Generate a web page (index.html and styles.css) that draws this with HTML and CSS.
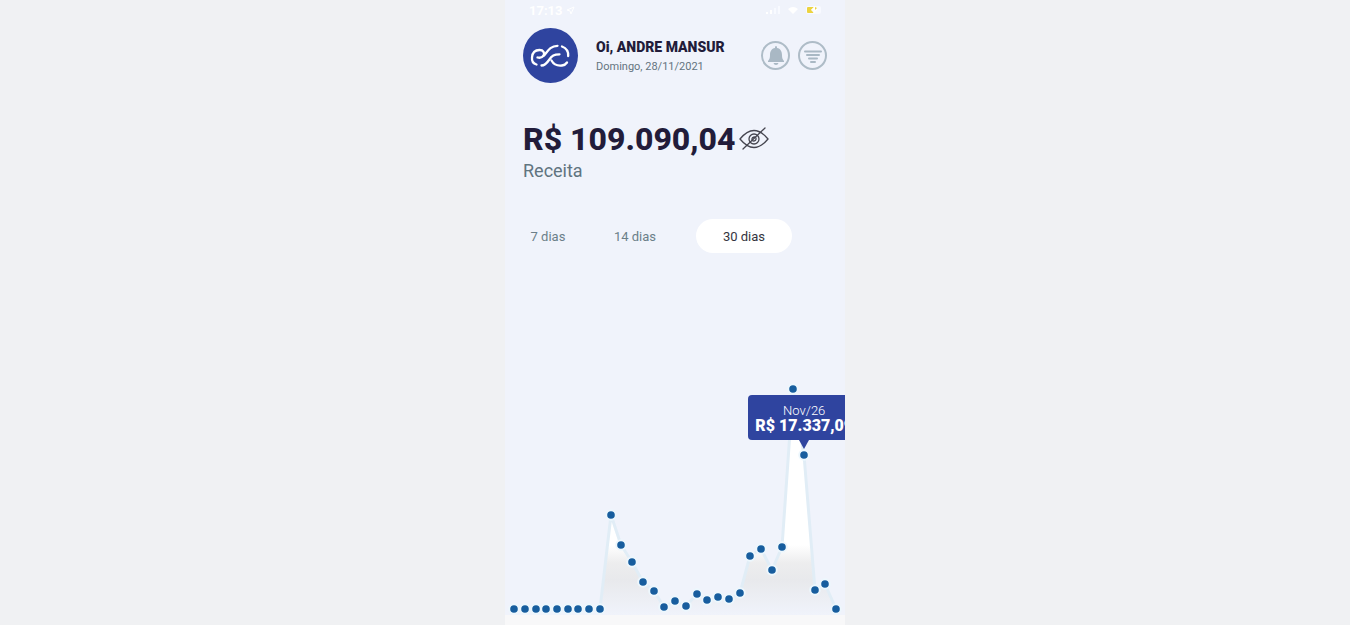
FILE: index.html
```html
<!DOCTYPE html>
<html lang="pt-BR">
<head>
    <meta charset="UTF-8">
    <meta name="viewport" content="width=device-width, initial-scale=1.0">
    <title>Receita</title>
    <link rel="stylesheet" href="styles.css">
</head>
<body>

    <main class="app">
        <!-- Status bar -->
        <div class="status-bar">
            <span class="status-time">17:13
                <svg width="9" height="9" viewBox="0 0 9 9" aria-hidden="true"><path d="M8 1 L1 4 L4 5 L5 8 Z" fill="none" stroke="#fff"/></svg>
            </span>
            <svg width="60" height="10" viewBox="0 0 60 10" aria-hidden="true">
                <path d="M1 9V7h2v2zM5 9V5h2v4z" fill="#fff"/>
                <path d="M9 9V3h2v6zM13 9V1h2v8z" fill="#f8faff"/>
                <path d="M23 4Q28 0 33 4L28 9Z" fill="#fff"/>
                <rect x="41" y="1" width="15" height="8" rx="2" fill="#f8faff"/>
                <path d="M43 2H49L46 5L49 8H43Q42 8 42 7V3Q42 2 43 2Z" fill="#ecd33f"/>
                <path d="M50 1L46 5H49L48 9L53 4H50Z" fill="#fff"/>
                <path d="M50 2L52 3L50 5Z" fill="#ecd33f"/>
            </svg>
        </div>

        <!-- Greeting -->
        <header class="header">
            <svg class="avatar" viewBox="0 0 55 55" aria-hidden="true">
                <circle cx="27.500" cy="27.500" r="27.500" fill="#2f449f"/>
                <g fill="none" stroke="#fff" stroke-width="2.300" stroke-linecap="round">
                    <path d="M13.500 36.500C10 35.500 8.700 32.500 9 29.500C9.400 24.500 12.500 22 16.500 22C20.500 22 22 25 20.500 27.500C19 30 16.500 30 14.500 29.500"/>
                    <path d="M18.500 37.500C22 37.500 24 35 26 32C29 27.500 31 26.300 36.500 26.300"/>
                    <path d="M20.500 28C24 25 26 17.800 34.500 17.800"/>
                    <path d="M28.500 32.500C31 37 35 38 39 37.500C41.500 37.300 43 36 44 34.500"/>
                    <path d="M39 18.500C43 20 45.500 23.500 45.200 28"/>
                </g>
            </svg>
            <div class="greeting">
                <h1 class="name">Oi, ANDRE MANSUR</h1>
                <p class="date">Domingo, 28/11/2021</p>
            </div>
            <div class="actions">
                <button class="icon-button" type="button" aria-label="Notificações">
                    <svg width="20" height="22" viewBox="0 0 20 22" aria-hidden="true">
                        <path d="M10 1C9 1 9 2 9 3C5.500 3.500 4 6.500 4 10C4 13 3.500 14 2 16V17H18V16C16.500 14 16 13 16 10C16 6.500 14.500 3.500 11 3C11 2 11 1 10 1ZM7.500 18H12.500Q12 20 10 20Q8 20 7.500 18Z" fill="#a9b8c4"/>
                    </svg>
                </button>
                <button class="icon-button" type="button" aria-label="Filtrar">
                    <svg width="20" height="20" viewBox="0 0 20 20" aria-hidden="true">
                        <path d="M2 5.500H18M4 9H16M6 12.500H14M8 16H12" stroke="#a9b8c4" stroke-width="2" stroke-linecap="round"/>
                    </svg>
                </button>
            </div>
        </header>

        <!-- Revenue -->
        <section class="revenue">
            <div class="amount-row">
                <strong class="amount">R$ 109.090,04</strong>
                <button class="eye-button" type="button" aria-label="Ocultar valor">
                    <svg width="30" height="24" viewBox="0 0 30 24" fill="none" stroke="#45454f" stroke-width="1.300" stroke-linecap="round" aria-hidden="true">
                        <path d="M1 12Q8 3.500 15 3.500Q22 3.500 29 12Q22 20.500 15 20.500Q8 20.500 1 12Z"/>
                        <circle cx="15" cy="12" r="5"/>
                        <path d="M13 13Q12.500 10 16 10M17 11Q17.500 14 14 14"/>
                        <path d="M4 22L26 1"/>
                    </svg>
                </button>
            </div>
            <p class="amount-label">Receita</p>
        </section>

        <!-- Period -->
        <nav class="periods" aria-label="Período">
            <button class="period" type="button">7 dias</button>
            <button class="period" type="button">14 dias</button>
            <button class="period active" type="button" aria-pressed="true">30 dias</button>
        </nav>

        <!-- Chart -->
        <section class="chart">
            <svg class="chart-plot" viewBox="0 0 340 250" role="img" aria-label="Receita por dia">
                <defs>
                    <linearGradient id="area" gradientUnits="userSpaceOnUse" x1="0" y1="150" x2="0" y2="250">
                        <stop offset="0" stop-color="#fff"/>
                        <stop offset="0.300" stop-color="#fff"/>
                        <stop offset="0.480" stop-color="#ededee"/>
                        <stop offset="0.650" stop-color="#e8e9ec"/>
                        <stop offset="1" stop-color="#f0f3fb"/>
                    </linearGradient>
                </defs>
                <path fill="url(#area)" d="M95 244L106 150L116 180L127 197L138 217L149 226L159 242L170 236L181 241L192 229L202 235L213 232L224 234L235 228L245 191L256 184L267 205L277 182L288 24L299 90L310 225L320 219L331 244V250H95Z"/>
                <path fill="none" stroke="#e1edf6" stroke-width="3" stroke-linejoin="round" d="M9 244H95L106 150L116 180L127 197L138 217L149 226L159 242L170 236L181 241L192 229L202 235L213 232L224 234L235 228L245 191L256 184L267 205L277 182L288 24L299 90L310 225L320 219L331 244"/>
                <g fill="#175d9e" stroke="#edf7fd" stroke-width="2">
                    <circle cx="9" cy="244" r="4.800"/>
                    <circle cx="20" cy="244" r="4.800"/>
                    <circle cx="31" cy="244" r="4.800"/>
                    <circle cx="41" cy="244" r="4.800"/>
                    <circle cx="52" cy="244" r="4.800"/>
                    <circle cx="63" cy="244" r="4.800"/>
                    <circle cx="73" cy="244" r="4.800"/>
                    <circle cx="84" cy="244" r="4.800"/>
                    <circle cx="95" cy="244" r="4.800"/>
                    <circle cx="106" cy="150" r="4.800"/>
                    <circle cx="116" cy="180" r="4.800"/>
                    <circle cx="127" cy="197" r="4.800"/>
                    <circle cx="138" cy="217" r="4.800"/>
                    <circle cx="149" cy="226" r="4.800"/>
                    <circle cx="159" cy="242" r="4.800"/>
                    <circle cx="170" cy="236" r="4.800"/>
                    <circle cx="181" cy="241" r="4.800"/>
                    <circle cx="192" cy="229" r="4.800"/>
                    <circle cx="202" cy="235" r="4.800"/>
                    <circle cx="213" cy="232" r="4.800"/>
                    <circle cx="224" cy="234" r="4.800"/>
                    <circle cx="235" cy="228" r="4.800"/>
                    <circle cx="245" cy="191" r="4.800"/>
                    <circle cx="256" cy="184" r="4.800"/>
                    <circle cx="267" cy="205" r="4.800"/>
                    <circle cx="277" cy="182" r="4.800"/>
                    <circle cx="288" cy="24" r="4.800"/>
                    <circle cx="299" cy="90" r="4.800"/>
                    <circle cx="310" cy="225" r="4.800"/>
                    <circle cx="320" cy="219" r="4.800"/>
                    <circle cx="331" cy="244" r="4.800"/>
                </g>
            </svg>
            <div class="tooltip">
                <span class="tooltip-date">Nov/26</span>
                <strong class="tooltip-value">R$ 17.337,09</strong>
            </div>
        </section>
        <footer class="bottom-strip"></footer>
    </main>

</body>
</html>
```
FILE: styles.css
```css
* {
    box-sizing: border-box;
}
body {
    margin: 0;
    background-color: #f0f1f3;
    font-family: Roboto, "Liberation Sans", sans-serif;
    color: #221c3a;
}
h1, p {
    margin: 0;
}
button {
    border: 0;
    padding: 0;
    background: none;
    font: inherit;
    color: inherit;
    cursor: pointer;
}
.app {
    display: flex;
    flex-direction: column;
    max-width: 340px;
    min-height: 100vh;
    margin: 0 auto;
    background-color: #f0f3fb;
    overflow: hidden;
}
.status-bar {
    display: flex;
    justify-content: space-between;
    align-items: center;
    height: 20px;
    padding: 0 20px 0 24px;
    color: #fff;
}
.status-time {
    font-size: 13px;
    font-weight: bold;
}

/* Greeting */
.header {
    display: flex;
    align-items: center;
    padding: 8px 18px 0;
}
.avatar {
    flex: none;
    width: 55px;
    height: 55px;
}
.greeting {
    flex: 1;
    margin-left: 18px;
    padding-top: 2px;
}
.name {
    font-size: 14px;
    line-height: 20px;
    font-weight: 900;
    white-space: nowrap;
}
.date {
    font-size: 11px;
    line-height: 20px;
    color: #64747f;
}
.actions {
    display: flex;
    gap: 8px;
}
.icon-button {
    display: flex;
    align-items: center;
    justify-content: center;
    width: 29px;
    height: 29px;
    border: 2px solid #aebcc7;
    border-radius: 50%;
}

/* Revenue */
.revenue {
    padding: 36px 18px 0;
}
.amount-row {
    display: flex;
    align-items: center;
    gap: 4px;
}
.amount {
    font-size: 32px;
    line-height: 40px;
    font-weight: 800;
    white-space: nowrap;
}
.eye-button {
    display: flex;
}
.amount-label {
    font-size: 18px;
    line-height: 24px;
    color: #60747f;
}

/* Period */
.periods {
    display: flex;
    padding: 36px 0 0 8px;
}
.period {
    width: 70px;
    height: 34px;
    border-radius: 17px;
    font-size: 13px;
    color: #6b7f89;
}
.period + .period {
    width: 96px;
    margin-left: 4px;
}
.period.active {
    margin-left: 13px;
    background-color: #fff;
    color: #34343e;
}

/* Chart */
.chart {
    position: relative;
    margin-top: 112px;
}
.chart-plot {
    display: block;
    width: 100%;
}
.tooltip {
    position: absolute;
    top: 12%;
    left: 88%;
    display: flex;
    flex-direction: column;
    align-items: center;
    width: 112px;
    height: 45px;
    margin-left: -56px;
    padding-top: 8px;
    border-radius: 4px;
    background-color: #2f449f;
    color: #fff;
    white-space: nowrap;
}
.tooltip::after {
    content: "";
    position: absolute;
    top: 100%;
    left: 50%;
    margin-left: -5px;
    border: 5px solid transparent;
    border-top: 9px solid #2f449f;
    border-bottom: 0;
}
.tooltip-date {
    font-size: 13px;
    line-height: 15px;
    font-weight: 300;
}
.tooltip-value {
    font-size: 16px;
    line-height: 15px;
    font-weight: 900;
}
.bottom-strip {
    flex: 1;
    min-height: 10px;
    background-color: #f8f8f9;
}
```
